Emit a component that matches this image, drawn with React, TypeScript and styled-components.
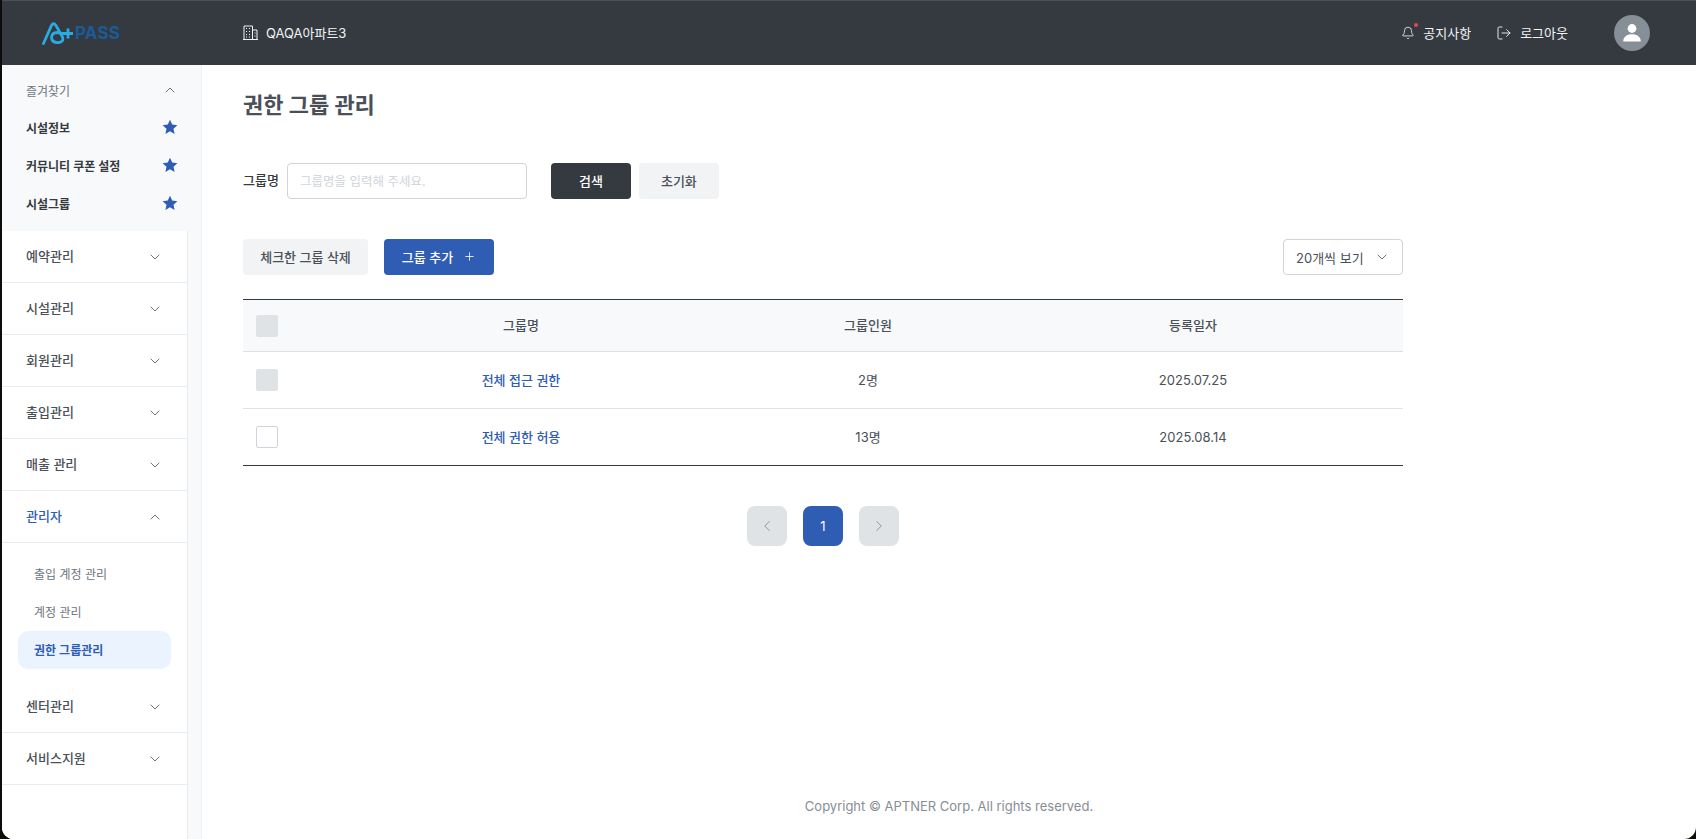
import React from "react";
import styled, { createGlobalStyle } from "styled-components";
import { Bell, ChevronDown, ChevronLeft, ChevronRight, ChevronUp, LogOut, Plus } from "lucide-react";

const Global = createGlobalStyle`
  html, body { margin: 0; height: 100%; overflow: hidden; background: #0c0d08; }
  body { font-family: Inter, "Noto Sans CJK KR", "Liberation Sans", sans-serif; color: #343a40; }
  #root { height: 100%; }
  * { box-sizing: border-box; }
`;

const Frame = styled.div`
  height: 839px;
  padding-left: 2px;
`;
const Window = styled.div`
  height: 100%;
  display: flex;
  flex-direction: column;
  background: #fff;
  border-radius: 0 0 12px 12px;
  overflow: hidden;
`;
const Header = styled.header`
  height: 65px;
  flex: none;
  display: flex;
  align-items: center;
  background: #343a3f;
  border-top: 1px solid #4c5155;
  color: #f1f3f5;
`;
const LogoBox = styled.div`
  width: 241px;
  padding-left: 40px;
  display: flex;
  align-items: center;
`;
const LogoText = styled.span`
  font-size: 17px;
  font-weight: 700;
  color: #1c5a9a;
  letter-spacing: 0.2px;
  margin-left: -1px;
`;
const Site = styled.div`
  display: flex;
  align-items: center;
  gap: 8px;
  font-size: 13px;
  flex: 1;
  padding-bottom: 1px;
`;
const HeaderLink = styled.div`
  display: flex;
  align-items: center;
  gap: 8px;
  font-size: 13px;
  margin-right: 25px;
  padding-bottom: 1px;
`;
const BellWrap = styled.span`
  position: relative;
  display: flex;
  &::after {
    content: "";
    position: absolute;
    top: -3px;
    right: -3px;
    width: 4px;
    height: 4px;
    border-radius: 50%;
    background: #e5484d;
  }
`;
const Avatar = styled.div`
  width: 36px;
  height: 36px;
  margin: 0 46px 0 21px;
  border-radius: 50%;
  background: #868e96;
  display: flex;
  align-items: center;
  justify-content: center;
`;
const Body = styled.div`
  flex: 1;
  display: flex;
  min-height: 0;
`;
const Sidebar = styled.aside`
  width: 200px;
  flex: none;
  display: flex;
  flex-direction: column;
  background: #f8f9fa;
  border-right: 1px solid #f1f3f5;
`;
const Favorites = styled.section`
  height: 166px;
  flex: none;
  padding: 8px 0 0 24px;
`;
const FavRow = styled.div<{ $head?: boolean }>`
  height: ${(p) => (p.$head ? "36px" : "38px")};
  padding: 0 23px 2px 0;
  display: flex;
  align-items: center;
  justify-content: space-between;
  font-size: 12px;
  font-weight: ${(p) => (p.$head ? 400 : 600)};
  color: ${(p) => (p.$head ? "#6c757d" : "#343a40")};
`;
const Menu = styled.nav`
  width: 186px;
  flex: 1;
  background: #fff;
  border-right: 1px solid #e9ecef;
`;
const MenuRow = styled.div<{ $active?: boolean }>`
  height: 52px;
  padding: 0 24px 2px;
  display: flex;
  align-items: center;
  justify-content: space-between;
  border-bottom: 1px solid #e9ecef;
  font-size: 13px;
  font-weight: 500;
  color: ${(p) => (p.$active ? "#2f5db4" : "#495057")};
`;
const ChevSlot = styled.span`
  display: flex;
  margin-top: 3px;
`;
const SubMenu = styled.div`
  padding: 12px 16px;
`;
const SubItem = styled.div<{ $active?: boolean }>`
  height: 38px;
  padding: 0 0 2px 16px;
  display: flex;
  align-items: center;
  border-radius: 10px;
  font-size: 12px;
  font-weight: ${(p) => (p.$active ? 600 : 400)};
  color: ${(p) => (p.$active ? "#2f5db4" : "#6c757d")};
  background: ${(p) => (p.$active ? "#ebf3fe" : "transparent")};
`;
const Main = styled.main`
  flex: 1;
  min-width: 0;
  display: flex;
  flex-direction: column;
  padding: 0 0 0 41px;
`;
const Title = styled.h1`
  margin: 0;
  padding-top: 24px;
  height: 98px;
  font-size: 22px;
  line-height: 32px;
  font-weight: 700;
  color: #495057;
`;
const SearchRow = styled.div`
  display: flex;
  align-items: center;
  height: 36px;
`;
const FieldLabel = styled.label`
  font-size: 13px;
  font-weight: 500;
  color: #343a40;
  margin-right: 8px;
  padding-bottom: 3px;
`;
const TextInput = styled.input`
  width: 240px;
  height: 36px;
  padding: 0 12px;
  margin-right: 24px;
  border: 1px solid #ced4da;
  border-radius: 4px;
  font: inherit;
  font-size: 12.5px;
  outline: none;
  &::placeholder { color: #ced4da; }
`;
const Button = styled.button<{ $variant: "dark" | "light" | "primary"; $w: number }>`
  width: ${(p) => p.$w}px;
  height: 36px;
  padding: 0 0 2px;
  display: inline-flex;
  align-items: center;
  justify-content: center;
  gap: 10px;
  border: 0;
  border-radius: 4px;
  font: inherit;
  font-size: 13px;
  font-weight: 500;
  color: ${(p) => (p.$variant === "light" ? "#495057" : "#fff")};
  background: ${(p) => (p.$variant === "dark" ? "#343a3f" : p.$variant === "primary" ? "#2f5db4" : "#f1f3f5")};
`;
const Gap = styled.span<{ $w: number }>`
  display: block;
  width: ${(p) => p.$w}px;
  flex: none;
`;
const Content = styled.div`
  width: 1160px;
`;
const Actions = styled.div`
  margin-top: 40px;
  height: 36px;
  display: flex;
  align-items: center;
`;
const Select = styled.div`
  margin-left: auto;
  width: 120px;
  height: 36px;
  padding: 0 12px;
  display: flex;
  align-items: center;
  justify-content: space-between;
  border: 1px solid #ced4da;
  border-radius: 4px;
  font-size: 13px;
  color: #495057;
`;
const Table = styled.div`
  margin-top: 24px;
  border-top: 1px solid #343a40;
  border-bottom: 1px solid #343a40;
  font-size: 13px;
`;
const Row = styled.div<{ $head?: boolean }>`
  height: ${(p) => (p.$head ? "51px" : "57px")};
  display: grid;
  grid-template-columns: 46px 464px 230px 420px;
  align-items: center;
  text-align: center;
  background: ${(p) => (p.$head ? "#f8f9fa" : "#fff")};
  font-weight: ${(p) => (p.$head ? 500 : 400)};
  color: #495057;
  & + & { border-top: 1px solid #dee2e6; }
`;
const Cell = styled.span`
  padding-bottom: 2px;
`;
const Check = styled.span<{ $on?: boolean }>`
  display: block;
  width: 22px;
  height: 22px;
  margin-left: 13px;
  border-radius: 2px;
  background: ${(p) => (p.$on ? "#dfe3e5" : "#fff")};
  border: 1px solid ${(p) => (p.$on ? "#dfe3e5" : "#ced4da")};
`;
const GroupLink = styled(Cell)`
  font-weight: 500;
  color: #2f5db4;
`;
const Pager = styled.div`
  margin-top: 40px;
  display: flex;
  justify-content: center;
  gap: 16px;
`;
const PageBtn = styled.div<{ $active?: boolean }>`
  width: 40px;
  height: 40px;
  display: flex;
  align-items: center;
  justify-content: center;
  border-radius: 8px;
  font-size: 13px;
  color: ${(p) => (p.$active ? "#fff" : "#868e96")};
  background: ${(p) => (p.$active ? "#2f5db4" : "#dfe3e5")};
`;
const Footer = styled.footer`
  margin-top: auto;
  margin-left: -41px;
  height: 41px;
  text-align: center;
  font-size: 13px;
  line-height: 16px;
  color: #868e96;
`;

const Star = () => (
  <svg width="16" height="16" viewBox="0 0 16 16">
    <path d="M8 .8l2.2 4.8 5.2.6-3.9 3.5 1.1 5.2L8 12.3l-4.6 2.6 1.1-5.2L.6 6.2l5.2-.6z" fill="#2f5db4" />
  </svg>
);

const Logo = () => (
  <svg width="34" height="24" viewBox="0 0 34 24" fill="none">
    <path d="M1.5 22.5 L9.5 4.5 Q11.5 1 14 4.5 L20.5 16 Q22 21 16.5 21.5 Q10 22 9.5 16.5 Q10 11.5 15 11.5 L22 12.5" stroke="#29abe2" strokeWidth="2.8" strokeLinecap="round" />
    <path d="M21 12.5h10M26 7.5v10" stroke="#29abe2" strokeWidth="2.8" />
  </svg>
);

const BuildingIcon = () => (
  <svg width="15" height="15" viewBox="0 0 15 15" fill="none" stroke="currentColor" strokeWidth="1">
    <path d="M1 14.5V1h8.5v13.5zM9.5 5H14v9.5H9.5M0 14.5h15" />
    <path d="M3 3.5h1M6 3.5h1M3 6.5h1M6 6.5h1M3 9.5h1M6 9.5h1M3 12h1M6 12h1M11.5 8h1M11.5 11h1" />
  </svg>
);

const UserIcon = () => (
  <svg width="22" height="22" viewBox="0 0 22 22" fill="#fff">
    <circle cx="11" cy="6.5" r="4.4" />
    <path d="M2.2 19.5c0-4.6 3.6-7.2 8.8-7.2s8.8 2.6 8.8 7.2z" />
  </svg>
);

const menuTop = ["예약관리", "시설관리", "회원관리", "출입관리", "매출 관리"];
const menuBottom = ["센터관리", "서비스지원"];
const Chev = ({ up }: { up?: boolean }) => (
  <ChevSlot>
    {up ? <ChevronUp size={16} strokeWidth={1.2} color="#495057" /> : <ChevronDown size={16} strokeWidth={1.2} color="#495057" />}
  </ChevSlot>
);

export default function App() {
  return (
    <Frame>
      <Global />
      <Window>
        <Header>
          <LogoBox>
            <Logo />
            <LogoText>PASS</LogoText>
          </LogoBox>
          <Site>
            <BuildingIcon />
            QAQA아파트3
          </Site>
          <HeaderLink>
            <BellWrap>
              <Bell size={14} strokeWidth={1.4} />
            </BellWrap>
            공지사항
          </HeaderLink>
          <HeaderLink>
            <LogOut size={16} strokeWidth={1.4} />
            로그아웃
          </HeaderLink>
          <Avatar>
            <UserIcon />
          </Avatar>
        </Header>
        <Body>
          <Sidebar>
            <Favorites>
              <FavRow $head>
                즐겨찾기
                <ChevronUp size={16} strokeWidth={1.2} color="#495057" />
              </FavRow>
              <FavRow>시설정보<Star /></FavRow>
              <FavRow>커뮤니티 쿠폰 설정<Star /></FavRow>
              <FavRow>시설그룹<Star /></FavRow>
            </Favorites>
            <Menu>
              {menuTop.map((m) => (
                <MenuRow key={m}>{m}<Chev /></MenuRow>
              ))}
              <MenuRow $active>관리자<Chev up /></MenuRow>
              <SubMenu>
                <SubItem>출입 계정 관리</SubItem>
                <SubItem>계정 관리</SubItem>
                <SubItem $active>권한 그룹관리</SubItem>
              </SubMenu>
              {menuBottom.map((m) => (
                <MenuRow key={m}>{m}<Chev /></MenuRow>
              ))}
            </Menu>
          </Sidebar>
          <Main>
            <Title>권한 그룹 관리</Title>
            <SearchRow>
              <FieldLabel>그룹명</FieldLabel>
              <TextInput placeholder="그룹명을 입력해 주세요." />
              <Button $variant="dark" $w={80}>검색</Button>
              <Gap $w={8} />
              <Button $variant="light" $w={80}>초기화</Button>
            </SearchRow>
            <Content>
              <Actions>
                <Button $variant="light" $w={125}>체크한 그룹 삭제</Button>
                <Gap $w={16} />
                <Button $variant="primary" $w={110}>그룹 추가<Plus size={13} strokeWidth={1.5} /></Button>
                <Select>20개씩 보기<ChevronDown size={16} strokeWidth={1.2} /></Select>
              </Actions>
              <Table>
                <Row $head>
                  <Check $on />
                  <Cell>그룹명</Cell>
                  <Cell>그룹인원</Cell>
                  <Cell>등록일자</Cell>
                </Row>
                <Row>
                  <Check $on />
                  <GroupLink>전체 접근 권한</GroupLink>
                  <Cell>2명</Cell>
                  <span>2025.07.25</span>
                </Row>
                <Row>
                  <Check />
                  <GroupLink>전체 권한 허용</GroupLink>
                  <Cell>13명</Cell>
                  <span>2025.08.14</span>
                </Row>
              </Table>
              <Pager>
                <PageBtn><ChevronLeft size={18} strokeWidth={1.2} /></PageBtn>
                <PageBtn $active>1</PageBtn>
                <PageBtn><ChevronRight size={18} strokeWidth={1.2} /></PageBtn>
              </Pager>
            </Content>
            <Footer>Copyright © APTNER Corp. All rights reserved.</Footer>
          </Main>
        </Body>
      </Window>
    </Frame>
  );
}
